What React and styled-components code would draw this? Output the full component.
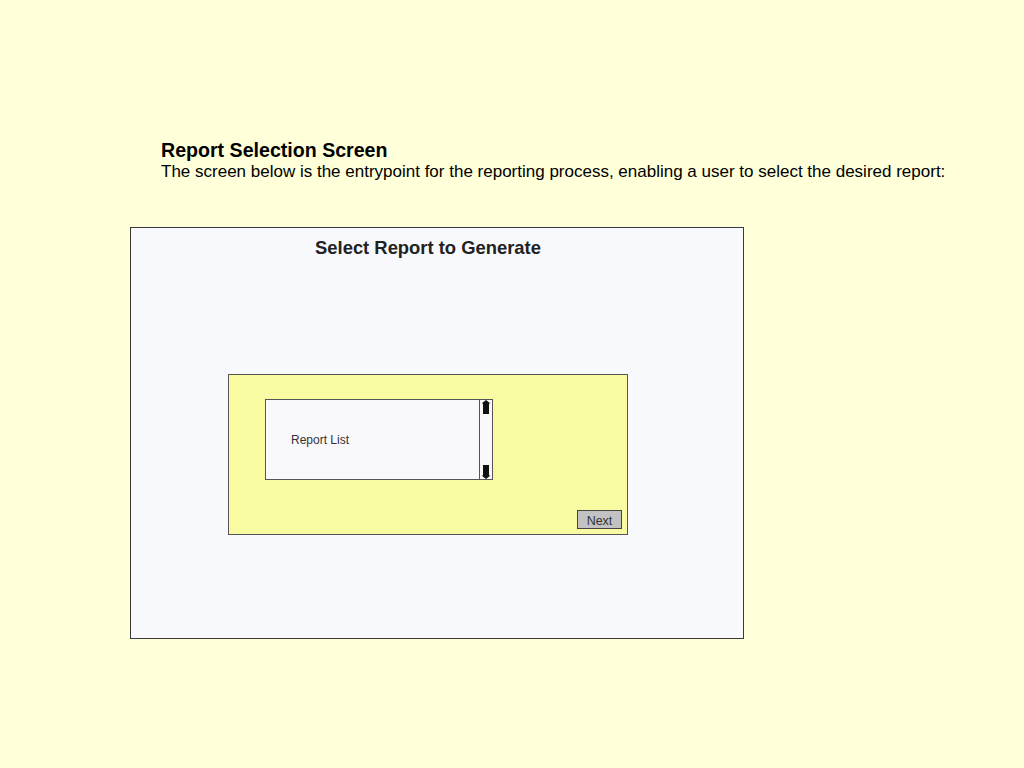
import React from "react";
import styled, { createGlobalStyle } from "styled-components";

const Global = createGlobalStyle`
  html, body { margin: 0; padding: 0; background: #ffffda; }
  body { font-family: "Liberation Sans", Arial, sans-serif; }
`;

const Page = styled.div`
  width: 1024px;
  height: 768px;
  background: #ffffda;
  display: flex;
  flex-direction: column;
  box-sizing: border-box;
  padding-top: 139px;
`;

const Intro = styled.div`
  padding-left: 161px;
  display: flex;
  flex-direction: column;
`;

const Heading = styled.h1`
  margin: 0;
  font-size: 19.6px;
  font-weight: bold;
  color: #000;
  line-height: 22px;
`;

const Lead = styled.p`
  margin: 1px 0 0;
  font-size: 17px;
  color: #000;
  line-height: 20px;
`;

const Panel = styled.div`
  margin: 45px 0 0 130px;
  width: 614px;
  height: 412px;
  box-sizing: border-box;
  border: 1px solid #3a3a3a;
  background: #f8f9fc;
  display: flex;
  flex-direction: column;
`;

const PanelTitle = styled.h2`
  margin: 9px 0 0;
  width: 594px;
  text-align: center;
  font-size: 18.4px;
  font-weight: bold;
  color: #222;
  line-height: 22px;
`;

const Form = styled.div`
  margin: 115px 0 0 97px;
  width: 400px;
  height: 161px;
  box-sizing: border-box;
  border: 1px solid #555;
  background: #f8fba2;
  display: flex;
  flex-direction: column;
  padding: 24px 5px 5px 36px;
`;

const ListBox = styled.div`
  width: 228px;
  height: 81px;
  box-sizing: border-box;
  border: 1px solid #555;
  background: #f9f9fc;
  display: flex;
`;

const ListArea = styled.div`
  flex: 1;
  display: flex;
  align-items: center;
  padding-left: 25px;
  font-size: 12px;
  color: #333;
`;

const Scroll = styled.div`
  width: 12px;
  border-left: 1px solid #555;
  display: flex;
  flex-direction: column;
  justify-content: space-between;
  align-items: center;
`;

const Footer = styled.div`
  margin-top: auto;
  display: flex;
  justify-content: flex-end;
`;

const NextButton = styled.button`
  width: 45px;
  height: 19px;
  box-sizing: border-box;
  border: 1px solid #444;
  background: #c2c2c2;
  color: #333;
  font-family: "Liberation Sans", Arial, sans-serif;
  font-size: 12.5px;
  padding: 2px 0 0;
  line-height: 14px;
`;

const Arrow = ({ down }) => (
  <svg width="10" height="14" viewBox="0 0 10 14" style={down ? { transform: "rotate(180deg)" } : undefined}>
    <path d="M5 0 L9.5 3.5 L8 3.5 L8 14 L2 14 L2 3.5 L0.5 3.5 Z" fill="#111" />
  </svg>
);

export default function App() {
  return (
    <>
      <Global />
      <Page>
        <Intro>
          <Heading>Report Selection Screen</Heading>
          <Lead>The screen below is the entrypoint for the reporting process, enabling a user to select the desired report:</Lead>
        </Intro>
        <Panel>
          <PanelTitle>Select Report to Generate</PanelTitle>
          <Form>
            <ListBox>
              <ListArea>Report List</ListArea>
              <Scroll>
                <Arrow />
                <Arrow down />
              </Scroll>
            </ListBox>
            <Footer>
              <NextButton>Next</NextButton>
            </Footer>
          </Form>
        </Panel>
      </Page>
    </>
  );
}
